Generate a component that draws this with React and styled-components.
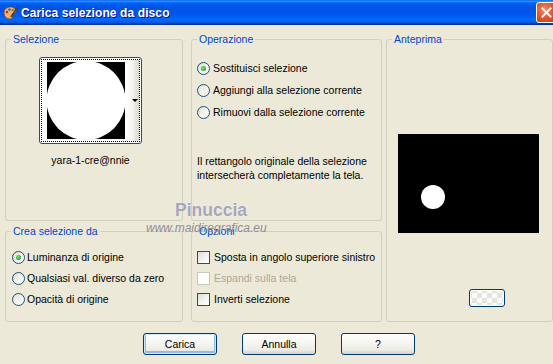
import React from "react";
import styled, { createGlobalStyle } from "styled-components";

const Global = createGlobalStyle`
  html, body { margin: 0; padding: 0; background: #ECE9D8; }
  body { font-family: "Liberation Sans", Arial, sans-serif; }
  #root { width: 553px; height: 364px; overflow: hidden; }
`;

const Window = styled.div`
  width: 553px;
  height: 364px;
  background: #ECE9D8;
  display: flex;
  flex-direction: column;
  overflow: hidden;
`;

const TitleBar = styled.div`
  height: 25px;
  flex: none;
  display: flex;
  align-items: center;
  padding-left: 2px;
  box-sizing: border-box;
  overflow: hidden;
  background: linear-gradient(to bottom, #0058EE 0%, #3593FF 4%, #288EFF 6%, #127DFF 8%, #036FFC 10%, #0262EE 14%, #0057E5 20%, #0054E3 24%, #0055EB 56%, #005BF5 66%, #026AFE 76%, #0062EF 86%, #0052D6 92%, #0040AB 94%, #003092 100%);
`;

const TitleText = styled.div`
  flex: 1;
  margin-left: 3px;
  color: #fff;
  font-weight: bold;
  font-size: 12px;
  letter-spacing: 0.1px;
  text-shadow: 1px 1px #0F1089;
  white-space: nowrap;
`;

const CloseBtn = styled.div`
  flex: none;
  width: 21px;
  height: 21px;
  margin-right: -4px;
  box-sizing: border-box;
  border: 1px solid #fff;
  border-radius: 3px;
  background: radial-gradient(circle at 40% 35%, #F08A6A 0%, #E25A35 45%, #C23A14 100%);
  display: flex;
  align-items: center;
  justify-content: center;
`;

const Body = styled.div`
  position: relative;
  flex: 1;
  display: flex;
  flex-direction: column;
  padding: 14px 0 0 5px;
`;

const Columns = styled.div`
  display: flex;
  align-items: flex-start;
`;

const Column = styled.div`
  display: flex;
  flex-direction: column;
  gap: 10px;
  width: ${(p) => p.$w}px;
  margin-right: ${(p) => p.$gap || 0}px;
`;

const Group = styled.div`
  position: relative;
  box-sizing: border-box;
  width: 100%;
  height: ${(p) => p.$h}px;
  border: 1px solid #D0D0BF;
  border-radius: 3px;
  display: flex;
  flex-direction: column;
  padding: ${(p) => p.$pad || "0"};
`;

const Legend = styled.span`
  position: absolute;
  top: -7px;
  left: 5px;
  padding: 0 2px;
  background: #ECE9D8;
  color: #0046D5;
  font-size: 10.5px;
  line-height: 13px;
  white-space: nowrap;
`;

const Label = styled.span`
  font-size: 10.5px;
  line-height: 13px;
  color: ${(p) => (p.$disabled ? "#ACA899" : "#000")};
  white-space: nowrap;
`;

const OptionList = styled.div`
  display: flex;
  flex-direction: column;
  gap: ${(p) => p.$gap}px;
`;

const Row = styled.div`
  display: flex;
  align-items: center;
  gap: ${(p) => p.$gap || 3}px;
  height: 13px;
`;

const Radio = styled.span`
  position: relative;
  flex: none;
  width: 13px;
  height: 13px;
  box-sizing: border-box;
  border-radius: 50%;
  border: 1px solid #1C5180;
  background: linear-gradient(135deg, #DCDCD7 0%, #F2F2EE 50%, #FFFFFF 100%);
  &::after {
    content: "";
    display: ${(p) => (p.$checked ? "block" : "none")};
    position: absolute;
    left: 3px;
    top: 3px;
    width: 5px;
    height: 5px;
    border-radius: 50%;
    background: radial-gradient(circle at 40% 40%, #8CE68A 0%, #3BB83A 50%, #1E921E 100%);
  }
`;

const Check = styled.span`
  flex: none;
  width: 13px;
  height: 13px;
  box-sizing: border-box;
  border: 1px solid ${(p) => (p.$disabled ? "#CAC8BB" : "#1C5180")};
  background: ${(p) =>
    p.$disabled ? "#FFFFFF" : "linear-gradient(135deg, #DCDCD7 0%, #F4F4F0 60%, #FFFFFF 100%)"};
`;

const ThumbWrap = styled.div`
  display: flex;
  flex-direction: column;
  align-items: center;
  width: 103px;
  margin: 17px 0 0 33px;
  gap: 10px;
`;

const ThumbBox = styled.div`
  box-sizing: border-box;
  width: 103px;
  height: 87px;
  border: 1px solid #1C5180;
  border-radius: 3px;
  background: #fff;
  padding: 1px;
`;

const ThumbFocus = styled.div`
  box-sizing: border-box;
  width: 100%;
  height: 100%;
  border: 1px dotted #000;
  display: flex;
  align-items: center;
  padding-left: 5px;
`;

const DropStrip = styled.div`
  margin-left: auto;
  width: 13px;
  align-self: stretch;
  background: linear-gradient(to right, #FFFFFF 0%, #F4F3EE 50%, #D8D6CC 100%);
  display: flex;
  align-items: center;
  justify-content: flex-end;
  padding-right: 1px;
  box-sizing: border-box;
`;

const Arrow = styled.span`
  width: 0;
  height: 0;
  border-left: 3px solid transparent;
  border-right: 3px solid transparent;
  border-top: 3px solid #000;
`;

const Description = styled.div`
  margin-top: 35px;
  font-size: 10.5px;
  line-height: 14px;
  color: #000;
`;

const PreviewCanvas = styled.div`
  width: 141px;
  height: 99px;
  background: #000;
  position: relative;
`;

const PreviewDot = styled.span`
  position: absolute;
  left: 23px;
  top: 51px;
  width: 24px;
  height: 24px;
  border-radius: 50%;
  background: #fff;
`;

const SmallButton = styled.div`
  box-sizing: border-box;
  width: 36px;
  height: 18px;
  margin: 56px 0 0 71px;
  border: 1px solid #003C74;
  border-radius: 3px;
  background:
    repeating-conic-gradient(#E4E4E0 0% 25%, #FAFAF8 0% 50%) 50% 50% / 10px 10px,
    #fff;
  box-shadow: inset 0 0 0 1px #fff;
`;

const ButtonRow = styled.div`
  display: flex;
  gap: 25px;
  margin: 11px 0 0 138px;
`;

const Button = styled.div`
  box-sizing: border-box;
  width: 74px;
  height: 22px;
  border: 1px solid #003C74;
  border-radius: 3px;
  background: linear-gradient(to bottom, #FFFFFF 0%, #F4F4F0 50%, #ECEBE6 80%, #D6D0C5 100%);
  box-shadow: ${(p) => (p.$default ? "inset 0 0 0 1px #CEE7FF, inset 0 -1px 0 2px #98B8EA" : "none")};
  display: flex;
  align-items: center;
  justify-content: center;
  font-size: 10.5px;
  color: #000;
`;

const Watermark = styled.div`
  position: absolute;
  left: 175px;
  top: 176px;
  font-size: 17.5px;
  font-weight: bold;
  line-height: 18px;
  color: #A6A6BA;
  text-shadow: 0 0 1px #fff;
  pointer-events: none;
`;

const WatermarkUrl = styled.div`
  position: absolute;
  left: 146px;
  top: 197px;
  font-size: 12px;
  font-style: italic;
  line-height: 12px;
  color: #8E8E9E;
  pointer-events: none;
`;

const AppIcon = () => (
  <svg width="16" height="16" viewBox="0 0 16 16">
    <path d="M2 8c0-4 3-6 6.5-6S14 4 14 6.5c0 2-2 2-3 2.2-1 .2-.8 1.6-.4 2.4.5 1.2-.3 2.9-2.6 2.9C4.5 14 2 11.5 2 8z" fill="#E8B070" stroke="#7A4A20" strokeWidth="0.8" />
    <circle cx="5" cy="7" r="1.2" fill="#D02020" />
    <circle cx="7.5" cy="4.6" r="1.2" fill="#2050D0" />
    <circle cx="10.8" cy="5" r="1.1" fill="#20A030" />
    <circle cx="5.5" cy="10.5" r="1.1" fill="#F0D020" />
    <path d="M9 12 L15 3" stroke="#603010" strokeWidth="1.4" />
  </svg>
);

const CloseX = () => (
  <svg width="11" height="11" viewBox="0 0 11 11">
    <path d="M1.5 1.5 L9.5 9.5 M9.5 1.5 L1.5 9.5" stroke="#fff" strokeWidth="2" strokeLinecap="square" />
  </svg>
);

const ThumbImage = () => (
  <svg width="78" height="77" viewBox="0 0 78 77">
    <rect width="78" height="77" fill="#000" />
    <circle cx="39" cy="38.5" r="39.5" fill="#fff" />
  </svg>
);

export default function App() {
  return (
    <Window>
      <Global />
      <TitleBar>
        <AppIcon />
        <TitleText>Carica selezione da disco</TitleText>
        <CloseBtn>
          <CloseX />
        </CloseBtn>
      </TitleBar>
      <Body>
        <Columns>
          <Column $w={178} $gap={8}>
            <Group $h={182}>
              <Legend>Selezione</Legend>
              <ThumbWrap>
                <ThumbBox>
                  <ThumbFocus>
                    <ThumbImage />
                    <DropStrip>
                      <Arrow />
                    </DropStrip>
                  </ThumbFocus>
                </ThumbBox>
                <Label>yara-1-cre@nnie</Label>
              </ThumbWrap>
            </Group>
            <Group $h={91} $pad="19px 0 0 6px">
              <Legend>Crea selezione da</Legend>
              <OptionList $gap={8}>
                <Row $gap={2}>
                  <Radio $checked />
                  <Label>Luminanza di origine</Label>
                </Row>
                <Row $gap={2}>
                  <Radio />
                  <Label>Qualsiasi val. diverso da zero</Label>
                </Row>
                <Row $gap={2}>
                  <Radio />
                  <Label>Opacità di origine</Label>
                </Row>
              </OptionList>
            </Group>
          </Column>
          <Column $w={191} $gap={4}>
            <Group $h={182} $pad="22px 0 0 5px">
              <Legend>Operazione</Legend>
              <OptionList $gap={9}>
                <Row>
                  <Radio $checked />
                  <Label>Sostituisci selezione</Label>
                </Row>
                <Row>
                  <Radio />
                  <Label>Aggiungi alla selezione corrente</Label>
                </Row>
                <Row>
                  <Radio />
                  <Label>Rimuovi dalla selezione corrente</Label>
                </Row>
              </OptionList>
              <Description>
                Il rettangolo originale della selezione
                <br />
                intersecherà completamente la tela.
              </Description>
            </Group>
            <Group $h={91} $pad="19px 0 0 5px">
              <Legend>Opzioni</Legend>
              <OptionList $gap={8}>
                <Row $gap={4}>
                  <Check />
                  <Label>Sposta in angolo superiore sinistro</Label>
                </Row>
                <Row $gap={4}>
                  <Check $disabled />
                  <Label $disabled>Espandi sulla tela</Label>
                </Row>
                <Row $gap={4}>
                  <Check />
                  <Label>Inverti selezione</Label>
                </Row>
              </OptionList>
            </Group>
          </Column>
          <Column $w={167}>
            <Group $h={283} $pad="94px 0 0 11px">
              <Legend>Anteprima</Legend>
              <PreviewCanvas>
                <PreviewDot />
              </PreviewCanvas>
              <SmallButton />
            </Group>
          </Column>
        </Columns>
        <ButtonRow>
          <Button $default>Carica</Button>
          <Button>Annulla</Button>
          <Button>?</Button>
        </ButtonRow>
        <Watermark>Pinuccia</Watermark>
        <WatermarkUrl>www.maidiregrafica.eu</WatermarkUrl>
      </Body>
    </Window>
  );
}
